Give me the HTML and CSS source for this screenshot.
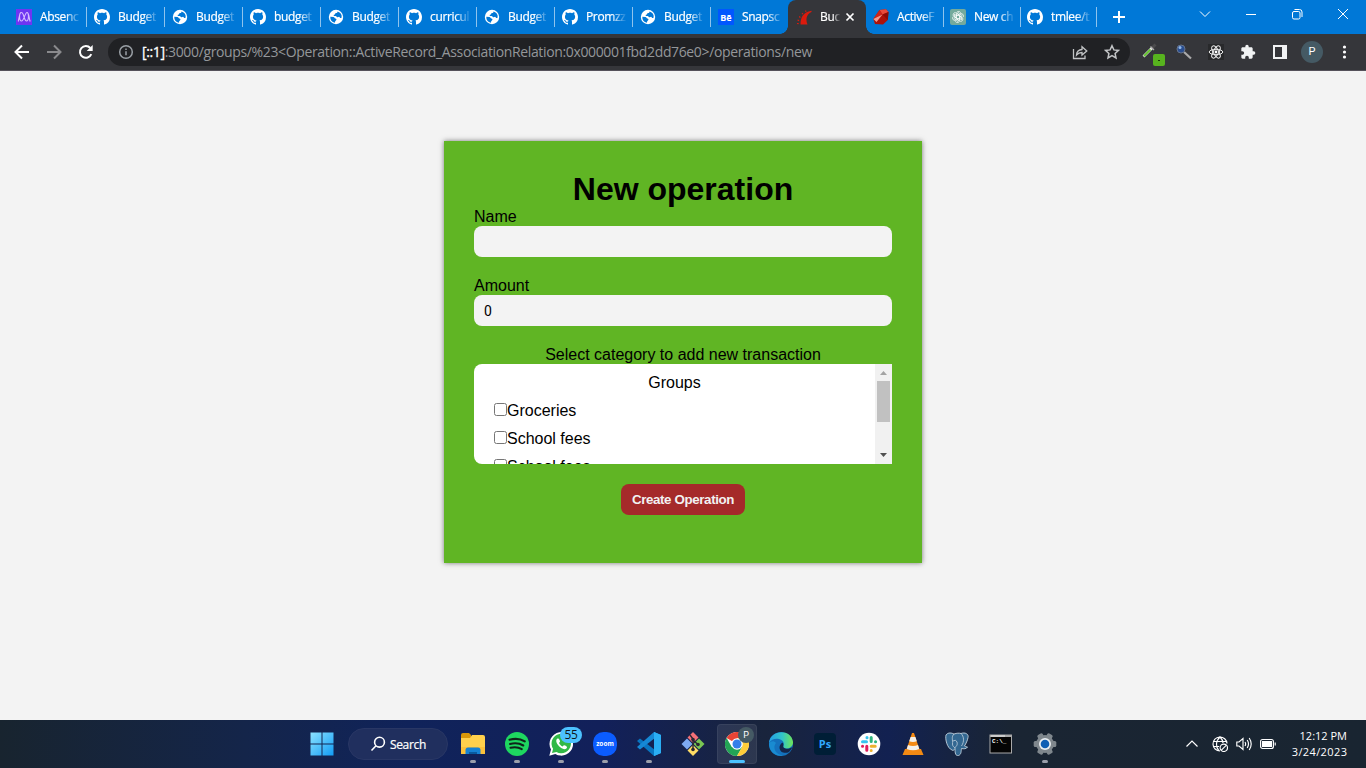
FILE: index.html
```html
<!DOCTYPE html>
<html lang="en">
<head>
<meta charset="utf-8">
<title>New operation</title>
<link rel="stylesheet" href="styles.css">
</head>
<body>
<svg class="sprite" aria-hidden="true">
  <symbol id="github" viewBox="0 0 16 16"><path fill="#fff" d="M8 0C3.58 0 0 3.58 0 8c0 3.54 2.29 6.53 5.47 7.59.4.07.55-.17.55-.38 0-.19-.01-.82-.01-1.49-2.01.37-2.53-.49-2.69-.94-.09-.23-.48-.94-.82-1.13-.28-.15-.68-.52-.01-.53.63-.01 1.08.58 1.23.82.72 1.21 1.87.87 2.33.66.07-.52.28-.87.51-1.07-1.78-.2-3.64-.89-3.64-3.95 0-.87.31-1.59.82-2.15-.08-.2-.36-1.02.08-2.12 0 0 .67-.21 2.2.82.64-.18 1.32-.27 2-.27s1.36.09 2 .27c1.53-1.04 2.2-.82 2.2-.82.44 1.1.16 1.92.08 2.12.51.56.82 1.27.82 2.15 0 3.07-1.87 3.75-3.65 3.95.29.25.54.73.54 1.48 0 1.07-.01 1.93-.01 2.2 0 .21.15.46.55.38A8.01 8.01 0 0 0 16 8c0-4.42-3.58-8-8-8z"/></symbol>
  <symbol id="globe" viewBox="0 0 16 16"><circle cx="8" cy="8" r="7.2" fill="#fff"/><path fill="#0078d7" d="M2.300 7.800 5.500 8c1 .1 1 1.300 1.900 1.500 1 .2 1.300.8.900 1.600-.5.900-1.300.9-1.300 2.600A5.700 5.700 0 0 1 2.300 7.800zM9.500 2.500c0 1.200-.6 1.500-1.500 1.500-1.100 0-.6 1.200-1.400 1.600-.5.300-.9.200-.9.800 0 .8 1 .5 1.900.6.900.1.900 1 1.700 1.200.9.200 1.200-.5 2-.3.700.2.600 1.100 1.300 1.200l1-.3A5.700 5.700 0 0 0 9.500 2.500z"/></symbol>
</svg>

<div class="tabs">
  <div class="tab"><svg viewBox="0 0 16 16"><rect width="16" height="16" fill="#6f35f2"/><path d="M2 12.500C3 12 3 3.500 5.500 3.500S8 12 10.500 12 13 3.500 11 3.500 8 12 5.500 12 3 3.500 5 3.500M11 3.500c2.500 0 2 8 3.300 9" fill="none" stroke="#d5bdff" stroke-width="1.100"/></svg><span>Absenc</span></div>
  <div class="tab"><svg><use href="#github"/></svg><span>Budget</span></div>
  <div class="tab"><svg><use href="#globe"/></svg><span>Budget</span></div>
  <div class="tab"><svg><use href="#github"/></svg><span>budget</span></div>
  <div class="tab"><svg><use href="#globe"/></svg><span>Budget</span></div>
  <div class="tab"><svg><use href="#github"/></svg><span>curricul</span></div>
  <div class="tab"><svg><use href="#globe"/></svg><span>Budget</span></div>
  <div class="tab"><svg><use href="#github"/></svg><span>Promzz</span></div>
  <div class="tab"><svg><use href="#globe"/></svg><span>Budget</span></div>
  <div class="tab"><svg viewBox="0 0 16 16"><rect width="16" height="16" fill="#0057ff"/><text x="8" y="11.500" text-anchor="middle" class="be">Bē</text></svg><span>Snapsc</span></div>
  <div class="tab active"><svg viewBox="0 0 16 16"><path d="M4.500 15.500C4.500 9 7 3 15.500 1.800V3C11.500 4.500 9 9 11.500 15.500z" fill="#dc1a0c"/><path d="M1 14.500l1.700.2M1.500 11l1.600.6M3.200 7.500l1.200 1M6 4.200l.9 1M9.500 1.500l.5 1.200" stroke="#dc1a0c" stroke-width="1.200"/></svg><span class="short">Buc</span><svg class="close" viewBox="0 0 10 10"><path d="M1.500 1.500l7 7M8.500 1.500l-7 7" stroke="#fff" stroke-width="1.700"/></svg></div>
  <div class="tab narrow plain"><svg viewBox="0 0 16 16"><path d="M6.500 1 13 .3 15.500 3 14.800 11 10 15.500 2 15 .3 10z" fill="#ad1109"/><path d="M6.500 1l3 4.500 6-2.500L13 .3z" fill="#e94b3b"/><path d="M.3 10 9.500 5.500 6.500 1z" fill="#cf2418"/><path d="M9.500 5.500.3 10 3.500 13z" fill="#f49a8e"/><path d="M9.500 5.500l5.300 5.500L15.500 3z" fill="#8d0c05"/></svg><span>ActiveF</span></div>
  <div class="tab narrow"><svg viewBox="0 0 16 16"><rect width="16" height="16" rx="2" fill="#74aa9c"/><g fill="none" stroke="#fff" stroke-width=".75"><g id="petal"><path d="M6.200 9V5c0-2.700 3.300-3.400 4.500-1.300M6.200 6.900 9.500 5l2.800 1.600"/></g><use href="#petal" transform="rotate(60 8 8)"/><use href="#petal" transform="rotate(120 8 8)"/><use href="#petal" transform="rotate(180 8 8)"/><use href="#petal" transform="rotate(240 8 8)"/><use href="#petal" transform="rotate(300 8 8)"/></g></svg><span>New ch</span></div>
  <div class="tab narrow last"><svg><use href="#github"/></svg><span>tmlee/t</span></div>
  <svg class="plus" viewBox="0 0 14 14"><path d="M7 1v12M1 7h12" stroke="#fff" stroke-width="2"/></svg>
  <div class="controls">
    <svg viewBox="0 0 12 12"><path d="M1 3.500l5 5 5-5"/></svg>
    <svg viewBox="0 0 12 12"><path d="M1 6.500h10"/></svg>
    <svg viewBox="0 0 12 12"><rect x="1.500" y="3.500" width="7.500" height="7.500" rx="1.500"/><path d="M3.500 1.500h5q2.500 0 2.500 2.500v5"/></svg>
    <svg viewBox="0 0 12 12"><path d="M1 1l10 10M11 1 1 11"/></svg>
  </div>
</div>

<div class="toolbar">
  <div class="slot"><svg viewBox="0 0 16 16" class="line"><path d="M15 8H2M8 1.500 1.500 8 8 14.500"/></svg></div>
  <div class="slot dim"><svg viewBox="0 0 16 16" class="line"><path d="M1 8h13M8 1.500 14.500 8 8 14.500"/></svg></div>
  <div class="slot"><svg viewBox="0 0 16 16" class="line"><path d="M13.300 10.200A5.900 5.900 0 1 1 12.300 4"/><path d="M14.700 1v6H8.700z" fill="#fff" stroke="none"/></svg></div>
  <div class="omnibox">
    <svg class="info" viewBox="0 0 16 16"><circle cx="8" cy="8" r="6.300"/><path d="M8 7.200v4M8 4.500v1.500"/></svg>
    <div class="url"><b>[::1]</b>:3000/groups/%23&lt;Operation::ActiveRecord_AssociationRelation:0x000001fbd2dd76e0&gt;/operations/new</div>
    <svg class="share" viewBox="0 0 16 16"><path d="M1.500 5v9.500h11.500v-3M4.500 11c.3-3.700 2.200-5.300 5.500-5.500V2.700L14.800 7 10 11V8.500c-2.500 0-4 .7-5.500 2.500z"/></svg>
    <svg class="star" viewBox="0 0 16 16"><path d="M8 1.700l1.900 4.200 4.600.5-3.400 3.100.9 4.500L8 11.700 4 14l.9-4.500L1.500 6.400l4.600-.5z"/></svg>
  </div>
  <div class="exts">
    <div class="slot"><svg class="dropper" viewBox="0 0 24 24"><path d="M1.500 15.500 10 7" stroke="#e4e4e4" stroke-width="2.600"/><path d="M2 15l6.500-6.500" stroke="#62c12b" stroke-width="1.800"/><path d="M10 7l3.500-3.500" stroke="#4b4b4d" stroke-width="3"/><path d="M8.500 5.500l3.500 3.500" stroke="#aaa" stroke-width="1.200"/><rect x="11" y="13" width="12" height="12" rx="2" fill="#57b31e"/><path d="M16 19.500h2" stroke="#173b05"/></svg></div>
    <div class="slot"><svg viewBox="0 0 16 16"><path d="M8 8l7 6.500" stroke="#aaa" stroke-width="2.200"/><circle cx="5" cy="5" r="4" fill="#294e91" stroke="#66748c"/><circle cx="4" cy="3.500" r="1.500" fill="#91b8e8"/></svg></div>
    <div class="slot"><svg viewBox="0 0 16 16"><rect width="16" height="16" fill="#28292b"/><g fill="none" stroke="#eee" stroke-width="1"><ellipse cx="8" cy="8" rx="6.800" ry="2.700"/><ellipse cx="8" cy="8" rx="6.800" ry="2.700" transform="rotate(60 8 8)"/><ellipse cx="8" cy="8" rx="6.800" ry="2.700" transform="rotate(120 8 8)"/></g><circle cx="8" cy="8" r="1.400" fill="#fff"/></svg></div>
    <div class="slot"><svg viewBox="0 0 24 24"><path fill="#f1f3f4" d="M20.500 11H19V7c0-1.100-.9-2-2-2h-4V3.500a2.500 2.500 0 0 0-5 0V5H4c-1.100 0-2 .9-2 2v3.800h1.500c1.500 0 2.700 1.200 2.700 2.700s-1.200 2.700-2.700 2.700H2V20c0 1.100.9 2 2 2h3.800v-1.500c0-1.500 1.200-2.700 2.700-2.700s2.700 1.200 2.700 2.700V22H17c1.100 0 2-.9 2-2v-4h1.500a2.500 2.500 0 0 0 0-5z"/></svg></div>
    <div class="slot"><svg viewBox="0 0 16 16"><path fill="#f1f3f4" fill-rule="evenodd" d="M1 1h14v14H1zM3 3v10h7V3z"/></svg></div>
    <div class="slot"><div class="avatar">P</div></div>
    <div class="slot"><svg viewBox="0 0 16 16"><g fill="#fff"><circle cx="8.500" cy="3" r="1.600"/><circle cx="8.500" cy="8" r="1.600"/><circle cx="8.500" cy="13" r="1.600"/></g></svg></div>
  </div>
</div>

<main class="page">
  <form class="card">
    <h1>New operation</h1>
    <div class="field"><label for="name">Name</label><input id="name" type="text"></div>
    <div class="field"><label for="amount">Amount</label><input id="amount" type="text" value="0"></div>
    <div class="caption">Select category to add new transaction</div>
    <div class="groups">
      <div class="list">
        <div class="legend">Groups</div>
        <label class="row"><input type="checkbox">Groceries</label>
        <label class="row"><input type="checkbox">School fees</label>
        <label class="row"><input type="checkbox">School fees</label>
      </div>
      <div class="scroll">
        <svg viewBox="0 0 17 17"><path d="M5 11h7L8.500 7z" fill="#a3a3a3"/></svg>
        <div class="thumb"></div>
        <svg viewBox="0 0 17 17"><path d="M5 6h7L8.500 10z" fill="#505050"/></svg>
      </div>
    </div>
    <button type="button">Create Operation</button>
  </form>
</main>

<footer class="taskbar">
  <div class="apps">
    <div class="app"><svg viewBox="0 0 24 24"><defs><linearGradient id="win" x2="24" y2="24" gradientUnits="userSpaceOnUse"><stop stop-color="#8fe4ff"/><stop offset="1" stop-color="#0f9bf5"/></linearGradient></defs><g fill="url(#win)"><rect x=".5" y=".5" width="11" height="11"/><rect x="12.500" y=".5" width="11" height="11"/><rect x=".5" y="12.500" width="11" height="11"/><rect x="12.500" y="12.500" width="11" height="11"/></g></svg></div>
    <div class="search"><svg viewBox="0 0 16 16"><circle cx="9.500" cy="6.200" r="4.900"/><path d="M6 9.800 1.500 14.500"/></svg>Search</div>
    <div class="app run"><svg viewBox="0 0 24 24"><path d="M0 3q0-2 2-2h6l2 2v5H0z" fill="#d99708"/><path d="M0 6h9l2-3h11q2 0 2 2v17H0z" fill="#ffd04c"/><path d="M0 15h24v7H0z" fill="#fbc13a"/><path d="M4.500 22v-4q0-2.500 2.500-2.500h10q2.500 0 2.500 2.500v4z" fill="#1581d3"/><path d="M8 22v-2h8v2z" fill="#095a9f"/></svg></div>
    <div class="app run"><svg viewBox="0 0 24 24"><circle cx="12" cy="12" r="12" fill="#1ed760"/><path d="M4.500 7.800c5-1.400 11-1 15.300 1.500M5 12c4.500-1.200 9.500-.8 13.300 1.500M5.500 15.800c4-1 8-.6 11.300 1.300" fill="none" stroke="#10231a" stroke-width="2.100" stroke-linecap="round"/></svg></div>
    <div class="app run"><svg viewBox="0 0 24 24"><path d="M.3 23.700 2 17.600A11.800 11.800 0 1 1 6.300 22z" fill="#fff"/><path d="M3 21l1.100-4.200A9.700 9.700 0 1 1 7.500 20z" fill="#31b947"/><path d="M8.500 6.500c-3 2 0 6.500 2.500 8.500 2.500 2.200 6 3.400 7 .5.400-1.200-2.700-2.700-3.200-2.200l-1.100 1.200c-1.700-.7-3-1.900-3.700-3.500l1-1.200c.4-.6-1-4-2.500-3.300z" fill="#fff"/></svg><span class="badge">55</span></div>
    <div class="app run"><svg viewBox="0 0 24 24"><rect width="24" height="24" rx="10.500" fill="#0b5cff"/><text x="12" y="14" text-anchor="middle" class="zoom">zoom</text></svg></div>
    <div class="app run"><svg viewBox="0 0 24 24"><path d="M17 0 24 3v18l-7 3z" fill="#2db0f5"/><path d="M17 24 0 9l3-2.500L18 18z" fill="#0875c2"/><path d="M17 0 0 15l3 2.500L18 6z" fill="#1688d5"/><path d="M17 0l7 3v18l-7 3z" fill="#2aaef4"/></svg></div>
    <div class="app"><svg viewBox="0 0 24 24"><path d="M12 0l5.500 5.500L12 11 6.500 5.500z" fill="#f47077"/><path d="M6 6.500l5.500 5.500L6 17.500.5 12z" fill="#7eaaf2"/><path d="M18 6.500l5.500 5.500-5.500 5.500-5.500-5.500z" fill="#79c653"/><path d="M12 13l5.500 5.500L12 24l-5.500-5.500z" fill="#ffdc65"/><path d="M9 3l3 4v11M12 8l5 4.500" fill="none" stroke="#292733" stroke-width="1.400"/><g fill="#292733"><circle cx="12" cy="7.500" r="1.800"/><circle cx="12" cy="17.500" r="1.800"/><circle cx="17" cy="12.500" r="1.800"/></g></svg></div>
    <div class="app current"><svg viewBox="0 0 24 24"><circle cx="12" cy="12" r="12" fill="#fff"/><path d="M12 12 1.600 6A12 12 0 0 1 22.400 6H12z" fill="#e84435"/><path d="M1.600 6A12 12 0 0 0 12 24l5.200-9H6.800z" fill="#23a455"/><path d="M22.400 6A12 12 0 0 1 12 24l5.200-9L12 6z" fill="#ffcd39"/><circle cx="12" cy="12" r="5.800" fill="#fff"/><circle cx="12" cy="12" r="4.500" fill="#347fe9"/></svg><span class="profile">P</span></div>
    <div class="app"><svg viewBox="0 0 24 24"><defs><linearGradient id="edge" x2="1"><stop stop-color="#239ee6"/><stop offset=".55" stop-color="#32c5c8"/><stop offset="1" stop-color="#6fe557"/></linearGradient></defs><circle cx="12" cy="12" r="12" fill="#1471bd"/><path d="M0 11C1-2 22-4 24 10c.3 6-7 8-9.500 5.500-1-1 .5-1.500.3-4C14.500 7 4 4 0 11z" fill="url(#edge)"/><path d="M14.500 15.500c2.500 2 6 1.500 9-.5-1 2-2 3.500-3.500 5-4 2-9 .5-9.500-4-.2-2 1-4.500 3.200-5.500 1.500 2 0 3.500.8 5z" fill="#14254a"/><path d="M7 11c-4 5 0 12 7 12.500-8 1.500-14-4-14-12 2-3 5-3 7-.5z" fill="#198bd1"/></svg></div>
    <div class="app"><svg viewBox="0 0 24 24"><rect x="1" y="1" width="22" height="22" rx="4" fill="#001e36"/><text x="12" y="16" text-anchor="middle" class="ps">Ps</text></svg></div>
    <div class="app"><svg viewBox="0 0 24 24"><circle cx="12" cy="12" r="11.300" fill="#fff"/><g stroke-width="3" stroke-linecap="round"><path d="M5.500 9.800h4M10 5.500v.2" stroke="#36c5f0"/><path d="M14.200 5.500v4M18.500 9.800h.1" stroke="#2eb67d"/><path d="M14.200 14.200h4M14.200 18.500v.1" stroke="#ecb22e"/><path d="M9.800 14.200v4M5.500 14.200h.1" stroke="#e01e5a"/></g></svg></div>
    <div class="app"><svg viewBox="0 0 24 24"><path d="M4 17h16l2.500 6h-21z" fill="#f28a13"/><path d="M11 1h2l6 18q-7 3-14 0z" fill="#f58a13"/><path d="M9.600 5h4.800l1.400 4.200q-3.800 1.600-7.600 0zM7 13q5 2 10 0l1.300 4q-6.300 2.600-12.600 0z" fill="#f4f0ea"/></svg></div>
    <div class="app"><svg viewBox="0 0 24 24"><path d="M7 18C2 16 0 7 1 3c2-3 6-2 8-1 3-1 5-1 7-.5 4-1.500 8 .5 7 4-.5 3-2 6-3.500 8.500 1 .8 2.500.7 3 1-1 2-4 2-6 1.500-.5 2.500 0 6-3 7-3 .5-3.500-2-3.500-7-1 1.500-2 2.500-3 1.500z" fill="#336791" stroke="#c3d2df" stroke-width=".9"/><path d="M9 2C6 5 8 8 7.500 12c-.2 2 1.500 3 2.500 4M16 1.500c3 3 3.500 8 .5 12.500M8 9q3-2 4 1c1 4-1.500 4-2 6" fill="none" stroke="#c3d2df" stroke-width=".8"/></svg></div>
    <div class="app"><svg viewBox="0 0 24 24"><rect x=".5" y="2.500" width="22.500" height="19" fill="#a9a9a9"/><rect x="1.500" y="5" width="20.500" height="15.500" fill="#050505"/><path d="M2 4h14" stroke="#eee"/><text x="3" y="11" class="cmd">C:\_</text></svg></div>
    <div class="app run"><svg viewBox="0 0 24 24"><g fill="#7f878d"><circle cx="12" cy="12" r="9"/><g id="teeth"><rect x=".7" y="9" width="22.600" height="6" rx="1.500"/></g><use href="#teeth" transform="rotate(60 12 12)"/><use href="#teeth" transform="rotate(120 12 12)"/></g><circle cx="12" cy="12" r="6" fill="#e9edf0"/><circle cx="12" cy="12" r="4.300" fill="#105fb4"/></svg></div>
  </div>
  <div class="tray">
    <svg viewBox="0 0 16 16"><path d="M2.500 10.500 8 5l5.500 5.500"/></svg>
    <svg viewBox="0 0 16 16"><path d="M8 15A7 7 0 1 1 15 7.500M8 1C3.500 5 3.500 11 7 15M8 1c2 2 3 4 3 6M1.500 5.500h13M1.200 10.500h6"/><circle cx="11.800" cy="11.800" r="3.700"/><path d="M9.200 14.400l5.200-5.200"/></svg>
    <svg viewBox="0 0 16 16"><path d="M.8 6H3l4-3.500v11L3 10H.8zM9 6q1.300 2 0 4M11.200 4q2.600 4 0 8M13.200 2q4 6 0 12"/></svg>
    <svg viewBox="0 0 16 16"><rect x=".6" y="3.500" width="12.800" height="9" rx="2"/><rect x="2" y="5" width="10" height="6" fill="#fff" stroke="none"/><path d="M15.200 6.500v3"/></svg>
    <div class="clock"><div>12:12 PM</div><div class="date">3/24/2023</div></div>
  </div>
</footer>
</body>
</html>
```

FILE: styles.css
```css
* { box-sizing: border-box; }
body {
  margin: 0;
  width: 1366px;
  height: 768px;
  overflow: hidden;
  display: flex;
  flex-direction: column;
  background: #f3f3f3;
  font-family: "Liberation Sans", Arial, sans-serif;
}
svg { display: block; flex: none; }
.sprite { display: none; }

/* tab strip */
.tabs {
  height: 34px;
  flex: none;
  display: flex;
  padding-left: 8px;
  background: #0078d7;
  color: #fff;
  font: 12px "Open Sans", "Noto Sans", sans-serif;
}
.tab {
  width: 78px;
  display: flex;
  align-items: center;
  gap: 8px;
  padding-left: 8px;
  background: linear-gradient(#8fc3ed, #8fc3ed) left 7px / 1px 20px no-repeat;
}
.tab:first-child, .tab.plain { background: none; }
.tab.narrow { width: 77px; padding-left: 7px; }
.tab.last { background-image: linear-gradient(#8fc3ed, #8fc3ed), linear-gradient(#8fc3ed, #8fc3ed); background-position: left 7px, right 7px; background-size: 1px 20px; background-repeat: no-repeat; }
.tab svg { width: 16px; height: 16px; }
.tab span {
  width: 42px;
  padding-bottom: 1px;
  white-space: nowrap;
  letter-spacing: -0.35px;
  -webkit-text-stroke: .2px #fff;
  -webkit-mask-image: linear-gradient(90deg, #000 60%, transparent 98%);
  mask-image: linear-gradient(90deg, #000 60%, transparent 98%);
}
.tab.active {
  position: relative;
  background: #35363a;
  border-radius: 8px 8px 0 0;
}
.tab.active::before,
.tab.active::after {
  content: "";
  position: absolute;
  bottom: 0;
  width: 8px;
  height: 8px;
}
.tab.active::before { left: -8px; background: radial-gradient(circle at 0 0, transparent 7.5px, #35363a 8px); }
.tab.active::after { right: -8px; background: radial-gradient(circle at 100% 0, transparent 7.5px, #35363a 8px); }
.tab .short { width: 21px; }
.tab svg.close { width: 10px; height: 10px; margin-left: -4px; }
.plus { width: 14px; height: 14px; margin: 10px 0 0 15px; }
.controls { margin-left: auto; display: flex; height: 28px; }
.controls svg {
  width: 46px;
  height: 12px;
  margin-top: 8px;
  fill: none;
  stroke: #fff;
  stroke-width: 1;
}

/* toolbar */
.toolbar {
  height: 37px;
  flex: none;
  display: flex;
  align-items: center;
  padding-left: 6px;
  background: #35363a;
  border-bottom: 1px solid #55515a;
}
.slot { width: 32px; display: flex; justify-content: center; flex: none; }
.slot svg { width: 16px; height: 16px; }
.slot .dropper { width: 24px; height: 24px; overflow: visible; margin: 2px 0 0 4px; }
.line { fill: none; stroke: #fff; stroke-width: 2; }
.dim { opacity: .42; }
.omnibox {
  width: 1022px;
  height: 28px;
  margin-left: 6px;
  padding: 0 10px;
  display: flex;
  align-items: center;
  border-radius: 14px;
  background: #202124;
}
.omnibox svg { width: 16px; height: 16px; fill: none; stroke: #c2c4c6; stroke-width: 1.3; }
.omnibox .info { stroke: #9aa0a6; stroke-width: 1.5; }
.omnibox .star { margin-left: 16px; stroke-width: 1.5; }
.url {
  margin-left: 8px;
  padding-bottom: 1px;
  flex: 1;
  white-space: nowrap;
  color: #94979a;
  font: 14px "Open Sans", "Noto Sans", sans-serif;
  letter-spacing: -0.36px;
}
.url b { font-weight: 400; color: #fff; -webkit-text-stroke: .3px #fff; }
.exts { display: flex; align-items: center; margin-left: 6px; }
.avatar {
  width: 22px;
  height: 22px;
  border-radius: 50%;
  background: #455a64;
  color: #fff;
  font: 11px/22px Roboto, sans-serif;
  text-align: center;
}

/* page */
.page { flex: 1; padding-top: 70px; background: #f3f3f3; }
.card {
  width: 478px;
  height: 422px;
  margin: 0 auto;
  padding: 30px;
  background: #60b524;
  box-shadow: 0 0 5px #777;
  font-size: 16px;
  line-height: 18px;
}
h1 { margin: 0; font-size: 32px; line-height: 37px; height: 36px; text-align: center; }
.field { display: flex; flex-direction: column; margin-bottom: 20px; }
.field label { height: 19px; padding-top: 1px; }
.field input {
  height: 31px;
  padding: 0 10px;
  border: 0;
  border-radius: 8px;
  background: #f3f3f3;
  color: #000;
  font: 14px "Liberation Sans Narrow", Roboto, Arial, sans-serif;
}
.field + .field label { height: 18px; padding-top: 0; }
.caption { text-align: center; }
.groups {
  height: 100px;
  display: flex;
  overflow: hidden;
  border-radius: 8px 0 0 8px;
  background: #fff;
}
.list { flex: 1; height: 100px; overflow: hidden; padding: 5px 20px 0; }
.legend { height: 28px; line-height: 28px; text-align: center; }
.row { height: 28px; display: flex; align-items: center; }
.row input { width: 13px; height: 13px; margin: 0 0 3px; }
.scroll { width: 17px; display: flex; flex-direction: column; background: #f1f1f1; }
.scroll svg { width: 17px; height: 17px; }
.scroll svg:last-child { margin-top: auto; }
.thumb { height: 41px; margin: 0 2px; background: #c1c1c1; }
button {
  display: block;
  width: 124px;
  height: 31px;
  margin: 20px auto 0;
  padding: 0;
  border: 0;
  border-radius: 8px;
  background: #a52a2a;
  color: #f2f2f2;
  font: bold 13.33px "Liberation Sans", Arial, sans-serif;
  letter-spacing: -0.37px;
}

/* taskbar */
.taskbar {
  height: 48px;
  flex: none;
  display: flex;
  padding-left: 300px;
  background: linear-gradient(90deg, #18242f 0, #14254a 18%, #10235a 30%, #12205a 44%, #19243c 56%, #122151 65%, #1a2533 74%, #192531 100%);
  color: #fff;
  font-family: "Open Sans", "Noto Sans", sans-serif;
}
.apps { display: flex; align-items: center; }
.app {
  position: relative;
  width: 44px;
  height: 48px;
  display: flex;
  align-items: center;
  justify-content: center;
}
.app > svg { width: 24px; height: 24px; }
.run::after,
.current::after {
  content: "";
  position: absolute;
  left: 19px;
  bottom: 5px;
  width: 6px;
  height: 3px;
  border-radius: 2px;
  background: #9b9fab;
}
.current::after { left: 14px; width: 16px; background: #4cc2ff; }
.current::before {
  content: "";
  position: absolute;
  inset: 4px 2px;
  border-radius: 4px;
  background: rgba(255, 255, 255, .09);
  border: 1px solid rgba(255, 255, 255, .06);
}
.current > svg { position: relative; }
.search {
  width: 100px;
  height: 32px;
  margin: 0 3px 0 4px;
  display: flex;
  align-items: center;
  justify-content: center;
  gap: 4px;
  border-radius: 16px;
  background: #202f5e;
  border: 1px solid #293765;
  font-size: 12px;
  letter-spacing: -0.3px;
  -webkit-text-stroke: .2px #fff;
}
.search svg { width: 16px; height: 16px; fill: none; stroke: #fff; stroke-width: 1.6; }
.badge {
  position: absolute;
  left: 21px;
  top: 7px;
  width: 22px;
  height: 16px;
  border-radius: 8px;
  background: #4cc2ff;
  color: #101820;
  font-size: 12px;
  line-height: 16px;
  letter-spacing: -0.4px;
  text-align: center;
}
.profile {
  position: absolute;
  left: 23px;
  top: 7px;
  width: 16px;
  height: 16px;
  border-radius: 50%;
  background: #455a64;
  font: 9px/16px Roboto, sans-serif;
  text-align: center;
}
.be { font: bold 9px "Open Sans", sans-serif; fill: #fff; }
.zoom { font: bold 6.5px "Open Sans", sans-serif; fill: #fff; }
.ps { font: bold 11px "Open Sans", sans-serif; fill: #31a8ff; }
.cmd { font: bold 6px "Liberation Mono", monospace; fill: #fff; }
.tray { margin-left: auto; padding-right: 19px; display: flex; align-items: center; }
.tray svg { width: 16px; height: 16px; margin-right: 8px; fill: none; stroke: #fff; stroke-width: 1.15; }
.tray svg:first-child { margin-right: 12px; }
.clock {
  width: 63px;
  text-align: right;
  font-size: 11px;
  line-height: 16px;
  white-space: nowrap;
}
.date { letter-spacing: .4px; margin-right: -0.4px; }
```
